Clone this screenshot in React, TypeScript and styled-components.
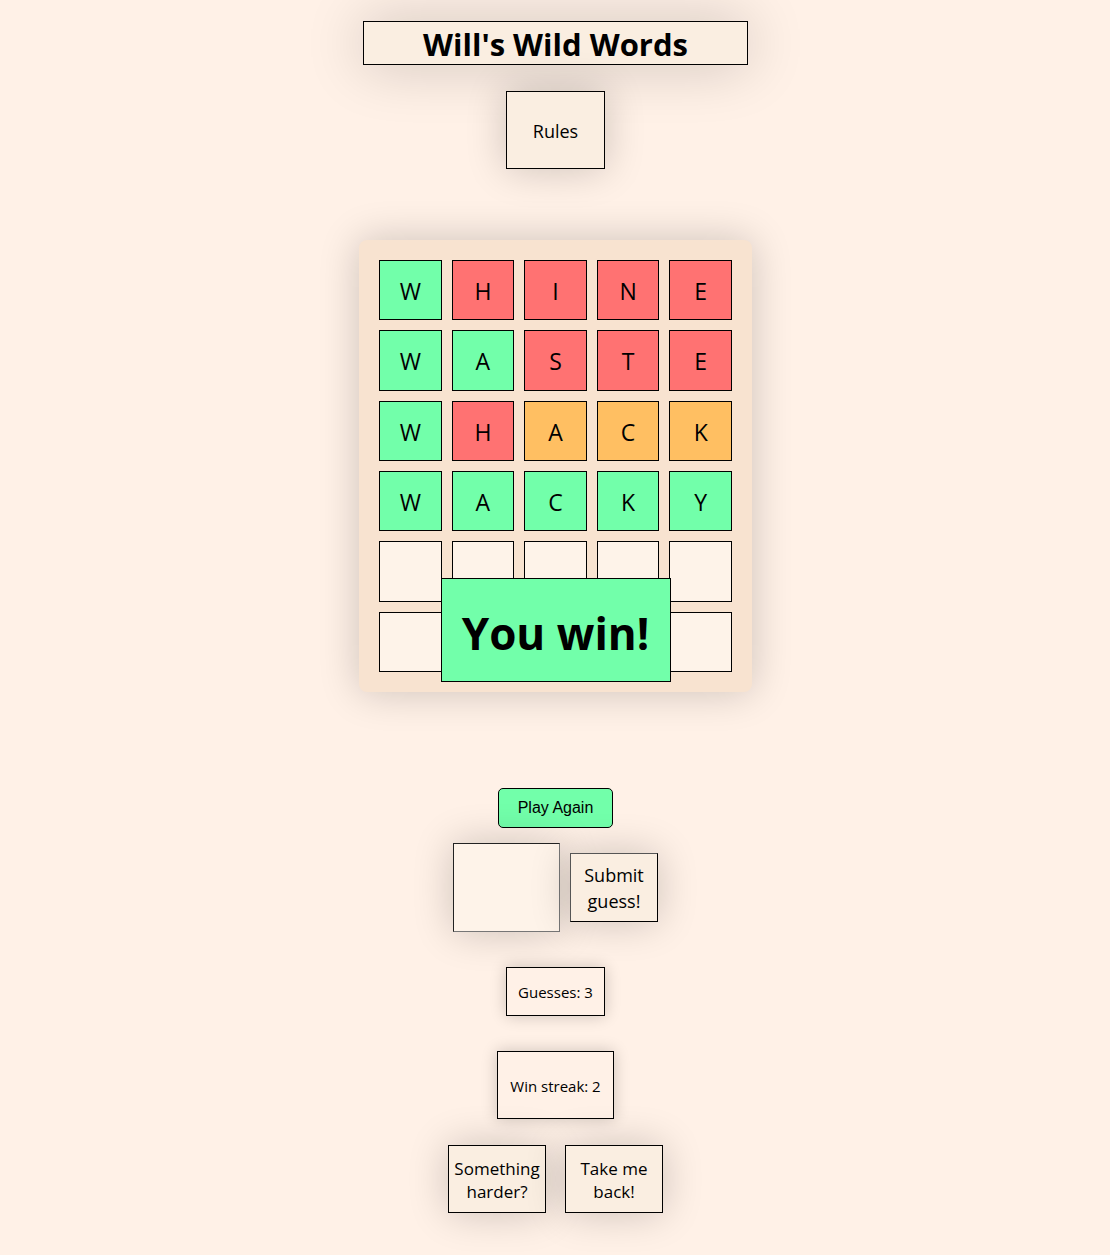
import React, { useState } from "react";
import styled, { createGlobalStyle } from "styled-components";

const colors = {
  page: "#fff1e7",
  panel: "#faeee1",
  board: "#f8e3d0",
  empty: "#fef3e9",
  hit: "#72ffaa",
  near: "#ffbf62",
  miss: "#ff7272",
};

type Mark = "hit" | "near" | "miss" | "empty";

const GlobalStyle = createGlobalStyle`
  *, *::before, *::after { box-sizing: border-box; }
  body {
    margin: 0;
    background: ${colors.page};
    color: #000;
    font-family: "Segoe UI", "Open Sans", "Noto Sans", sans-serif;
    font-weight: 400;
  }
`;

const Page = styled.main`
  display: flex;
  flex-direction: column;
  align-items: center;
  padding: 21px 16px 42px 17px;
`;

const Title = styled.h1`
  width: 100%;
  max-width: 385px;
  margin: 0 0 26px;
  padding: 3px 0 1px;
  border: 1px solid #000;
  background: ${colors.panel};
  box-shadow: 0 0 60px rgba(0, 0, 0, 0.2);
  font-size: 31px;
  font-weight: 700;
  line-height: 38px;
  text-align: center;
`;

const PanelButton = styled.button<{ $width: number; $height: number; $size: number }>`
  width: ${(p) => p.$width}px;
  min-height: ${(p) => p.$height}px;
  padding: 1px 0 0;
  border: 1px solid #000;
  background: ${colors.panel};
  box-shadow: 0 0 40px rgba(0, 0, 0, 0.2);
  color: #000;
  font-family: inherit;
  font-weight: inherit;
  font-size: ${(p) => p.$size}px;
  line-height: ${(p) => (p.$size > 17 ? 26 : 23)}px;
`;

const SubmitButton = styled(PanelButton)`
  border-color: #555 #000 #000 #555;
`;

const Board = styled.section`
  position: relative;
  width: 100%;
  max-width: 393px;
  margin: 71px 0 96px;
  padding: 20px;
  border-radius: 8px;
  background: ${colors.board};
  box-shadow: 0 0 40px rgba(0, 0, 0, 0.2);
`;

const Grid = styled.div`
  display: grid;
  grid-template-columns: repeat(5, 1fr);
  grid-template-rows: repeat(6, 1fr);
  gap: 10px;
  height: 412px;
`;

const Tile = styled.div<{ $mark: Mark }>`
  display: flex;
  align-items: center;
  justify-content: center;
  padding-top: 2px;
  border: 1px solid #000;
  background: ${(p) => colors[p.$mark]};
  font-size: 23px;
  line-height: 30px;
`;

const WinBanner = styled.h2`
  position: absolute;
  bottom: 10px;
  left: 50%;
  transform: translateX(-50%);
  width: 230px;
  margin: 0;
  padding: 24px 0 18px;
  border: 1px solid #000;
  background: ${colors.hit};
  font-size: 44px;
  font-weight: 700;
  line-height: 60px;
  text-align: center;
  white-space: nowrap;
`;

const PlayAgain = styled.button`
  width: 115px;
  height: 40px;
  margin-bottom: 15px;
  padding: 0;
  border: 1px solid #000;
  border-radius: 5px;
  background: ${colors.hit};
  color: #000;
  font-family: Arial, "Liberation Sans", sans-serif;
  font-size: 16px;
`;

const GuessForm = styled.form`
  display: flex;
  align-items: center;
  gap: 10px;
  margin-bottom: 35px;
`;

const GuessInput = styled.input`
  width: 107px;
  height: 89px;
  padding: 0 10px;
  border: 1px solid;
  border-color: #222 #767676 #767676 #222;
  border-radius: 0;
  background: ${colors.empty};
  box-shadow: 0 0 40px rgba(0, 0, 0, 0.2);
  font-family: inherit;
  font-size: 23px;
  text-align: center;
`;

const Counter = styled.p<{ $tall?: boolean }>`
  display: flex;
  align-items: center;
  justify-content: center;
  width: ${(p) => (p.$tall ? 117 : 99)}px;
  min-height: ${(p) => (p.$tall ? 68 : 49)}px;
  margin: 0 0 ${(p) => (p.$tall ? 26 : 35)}px;
  padding-top: 1px;
  border: 1px solid #000;
  box-shadow: 0 0 15px rgba(0, 0, 0, 0.2);
  background: ${colors.page};
  font-size: 15px;
  white-space: nowrap;
`;

const Links = styled.nav`
  display: flex;
  gap: 19px;
`;

const guesses: { word: string; marks: Mark[] }[] = [
  { word: "WHINE", marks: ["hit", "miss", "miss", "miss", "miss"] },
  { word: "WASTE", marks: ["hit", "hit", "miss", "miss", "miss"] },
  { word: "WHACK", marks: ["hit", "miss", "near", "near", "near"] },
  { word: "WACKY", marks: ["hit", "hit", "hit", "hit", "hit"] },
];

const ROWS = 6;
const COLUMNS = 5;

export default function App() {
  const [guess, setGuess] = useState("");

  return (
    <>
      <GlobalStyle />
      <Page>
        <Title>Will's Wild Words</Title>
        <PanelButton type="button" $width={99} $height={78} $size={18}>
          Rules
        </PanelButton>
        <Board aria-label="Guesses">
          <Grid>
            {Array.from({ length: ROWS * COLUMNS }, (_, i) => {
              const row = guesses[Math.floor(i / COLUMNS)];
              const column = i % COLUMNS;
              return (
                <Tile key={i} $mark={row ? row.marks[column] : "empty"}>
                  {row?.word[column]}
                </Tile>
              );
            })}
          </Grid>
          <WinBanner role="status">You win!</WinBanner>
        </Board>
        <PlayAgain type="button">Play Again</PlayAgain>
        <GuessForm onSubmit={(e) => e.preventDefault()}>
          <GuessInput
            aria-label="Your guess"
            maxLength={COLUMNS}
            value={guess}
            onChange={(e) => setGuess(e.target.value)}
          />
          <SubmitButton type="submit" $width={88} $height={69} $size={18}>
            Submit guess!
          </SubmitButton>
        </GuessForm>
        <Counter>Guesses: 3</Counter>
        <Counter $tall>Win streak: 2</Counter>
        <Links>
          <PanelButton type="button" $width={98} $height={68} $size={17}>
            Something harder?
          </PanelButton>
          <PanelButton type="button" $width={98} $height={68} $size={17}>
            Take me back!
          </PanelButton>
        </Links>
      </Page>
    </>
  );
}
